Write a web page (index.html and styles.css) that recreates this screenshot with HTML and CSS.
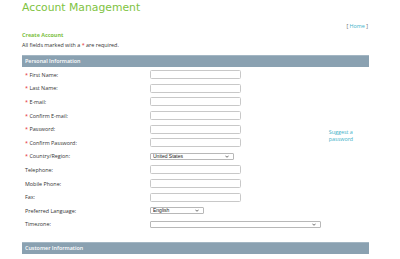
FILE: index.html
```html
<!DOCTYPE html>
<html lang="en">
<head>
    <meta charset="UTF-8">
    <title>Account Management</title>
    <link rel="stylesheet" href="styles.css">
</head>
<body>
<div class="page">
    <h1 class="title">Account Management</h1>

    <div class="home-row">[ <a href="#">Home</a> ]</div>

    <h2 class="subtitle">Create Account</h2>
    <p class="note">All fields marked with a <span class="req">*</span> are required.</p>

    <div class="section-bar">Personal Information</div>

    <table class="form">
        <tr>
            <td class="label"><span class="req">*</span> First Name:</td>
            <td><input type="text" class="field"></td>
            <td class="aside"></td>
        </tr>
        <tr>
            <td class="label"><span class="req">*</span> Last Name:</td>
            <td><input type="text" class="field"></td>
            <td class="aside"></td>
        </tr>
        <tr>
            <td class="label"><span class="req">*</span> E-mail:</td>
            <td><input type="text" class="field"></td>
            <td class="aside"></td>
        </tr>
        <tr>
            <td class="label"><span class="req">*</span> Confirm E-mail:</td>
            <td><input type="text" class="field"></td>
            <td class="aside"></td>
        </tr>
        <tr>
            <td class="label"><span class="req">*</span> Password:</td>
            <td><input type="password" class="field"></td>
            <td class="aside" rowspan="2"><a href="#">Suggest a<br>password</a></td>
        </tr>
        <tr>
            <td class="label"><span class="req">*</span> Confirm Password:</td>
            <td><input type="password" class="field"></td>
        </tr>
        <tr>
            <td class="label"><span class="req">*</span> Country/Region:</td>
            <td><select class="pick country"><option>United States</option></select></td>
            <td class="aside"></td>
        </tr>
        <tr>
            <td class="label">Telephone:</td>
            <td><input type="text" class="field"></td>
            <td class="aside"></td>
        </tr>
        <tr>
            <td class="label">Mobile Phone:</td>
            <td><input type="text" class="field"></td>
            <td class="aside"></td>
        </tr>
        <tr>
            <td class="label">Fax:</td>
            <td><input type="text" class="field"></td>
            <td class="aside"></td>
        </tr>
        <tr>
            <td class="label">Preferred Language:</td>
            <td><select class="pick language"><option>English</option></select></td>
            <td class="aside"></td>
        </tr>
        <tr>
            <td class="label">Timezone:</td>
            <td colspan="2"><select class="pick timezone"><option></option></select></td>
        </tr>
    </table>

    <div class="section-bar customer">Customer Information</div>
</div>
</body>
</html>
```

FILE: styles.css
```css
* {
    box-sizing: border-box;
}

html, body {
    margin: 0;
    padding: 0;
    background: #fff;
    overflow: hidden;
}

body {
    font-family: 'Open Sans', 'Liberation Sans', sans-serif;
    font-size: 5.4px;
    color: #333;
}

.page {
    width: 347px;
    margin-left: 22px;
}

.title {
    font-family: 'DejaVu Sans', sans-serif;
    font-weight: normal;
    font-size: 10.8px;
    line-height: 15px;
    color: #80c342;
    margin: 0;
}

.home-row {
    text-align: right;
    padding-right: 1px;
    margin-top: 7px;
    line-height: 8px;
    color: #666;
}

a {
    color: #3eb1c8;
    text-decoration: none;
}

.subtitle {
    font-size: 5.4px;
    font-weight: bold;
    color: #7cc142;
    margin: 1px 0 0;
    line-height: 8px;
}

.note {
    margin: 2px 0 0;
    line-height: 8px;
}

.req {
    color: #e3262f;
}

.section-bar {
    margin-top: 6px;
    height: 12px;
    line-height: 11px;
    padding-left: 3px;
    background: #8aa1b1;
    border-top: 1px solid #a3b6c3;
    color: #fff;
    font-weight: 600;
}

.section-bar.customer {
    margin-top: 11px;
}

.form {
    border-collapse: collapse;
    margin-top: 1px;
    width: 100%;
}

.form td {
    padding: 0;
    height: 13.6px;
    vertical-align: middle;
}

.form .label {
    width: 128px;
    padding-left: 3px;
}

.form .aside {
    padding-left: 73px;
    line-height: 6.5px;
}

.field {
    display: block;
    width: 91px;
    height: 9px;
    border: 1px solid #c8c8c8;
    border-radius: 1.5px;
    padding: 0;
    margin: 0;
    background: #fff;
}

.pick {
    display: block;
    height: 7px;
    -webkit-appearance: none;
    appearance: none;
    font-family: 'Liberation Sans', sans-serif;
    font-size: 5px;
    line-height: 5px;
    border: 1px solid #b8b8b8;
    border-radius: 1px;
    padding: 0 0 0 2px;
    margin: 0;
    color: #222;
    background: #fff url("data:image/svg+xml,%3Csvg xmlns='http://www.w3.org/2000/svg' width='5' height='3' viewBox='0 0 5 3'%3E%3Cpath d='M0.5 0.5 L2.5 2.5 L4.5 0.5' fill='none' stroke='%23333' stroke-width='0.9'/%3E%3C/svg%3E") no-repeat right 4px center;
    background-size: 4px 3px;
}

.country {
    width: 84px;
}

.language {
    width: 54px;
}

.timezone {
    width: 171px;
}
```
